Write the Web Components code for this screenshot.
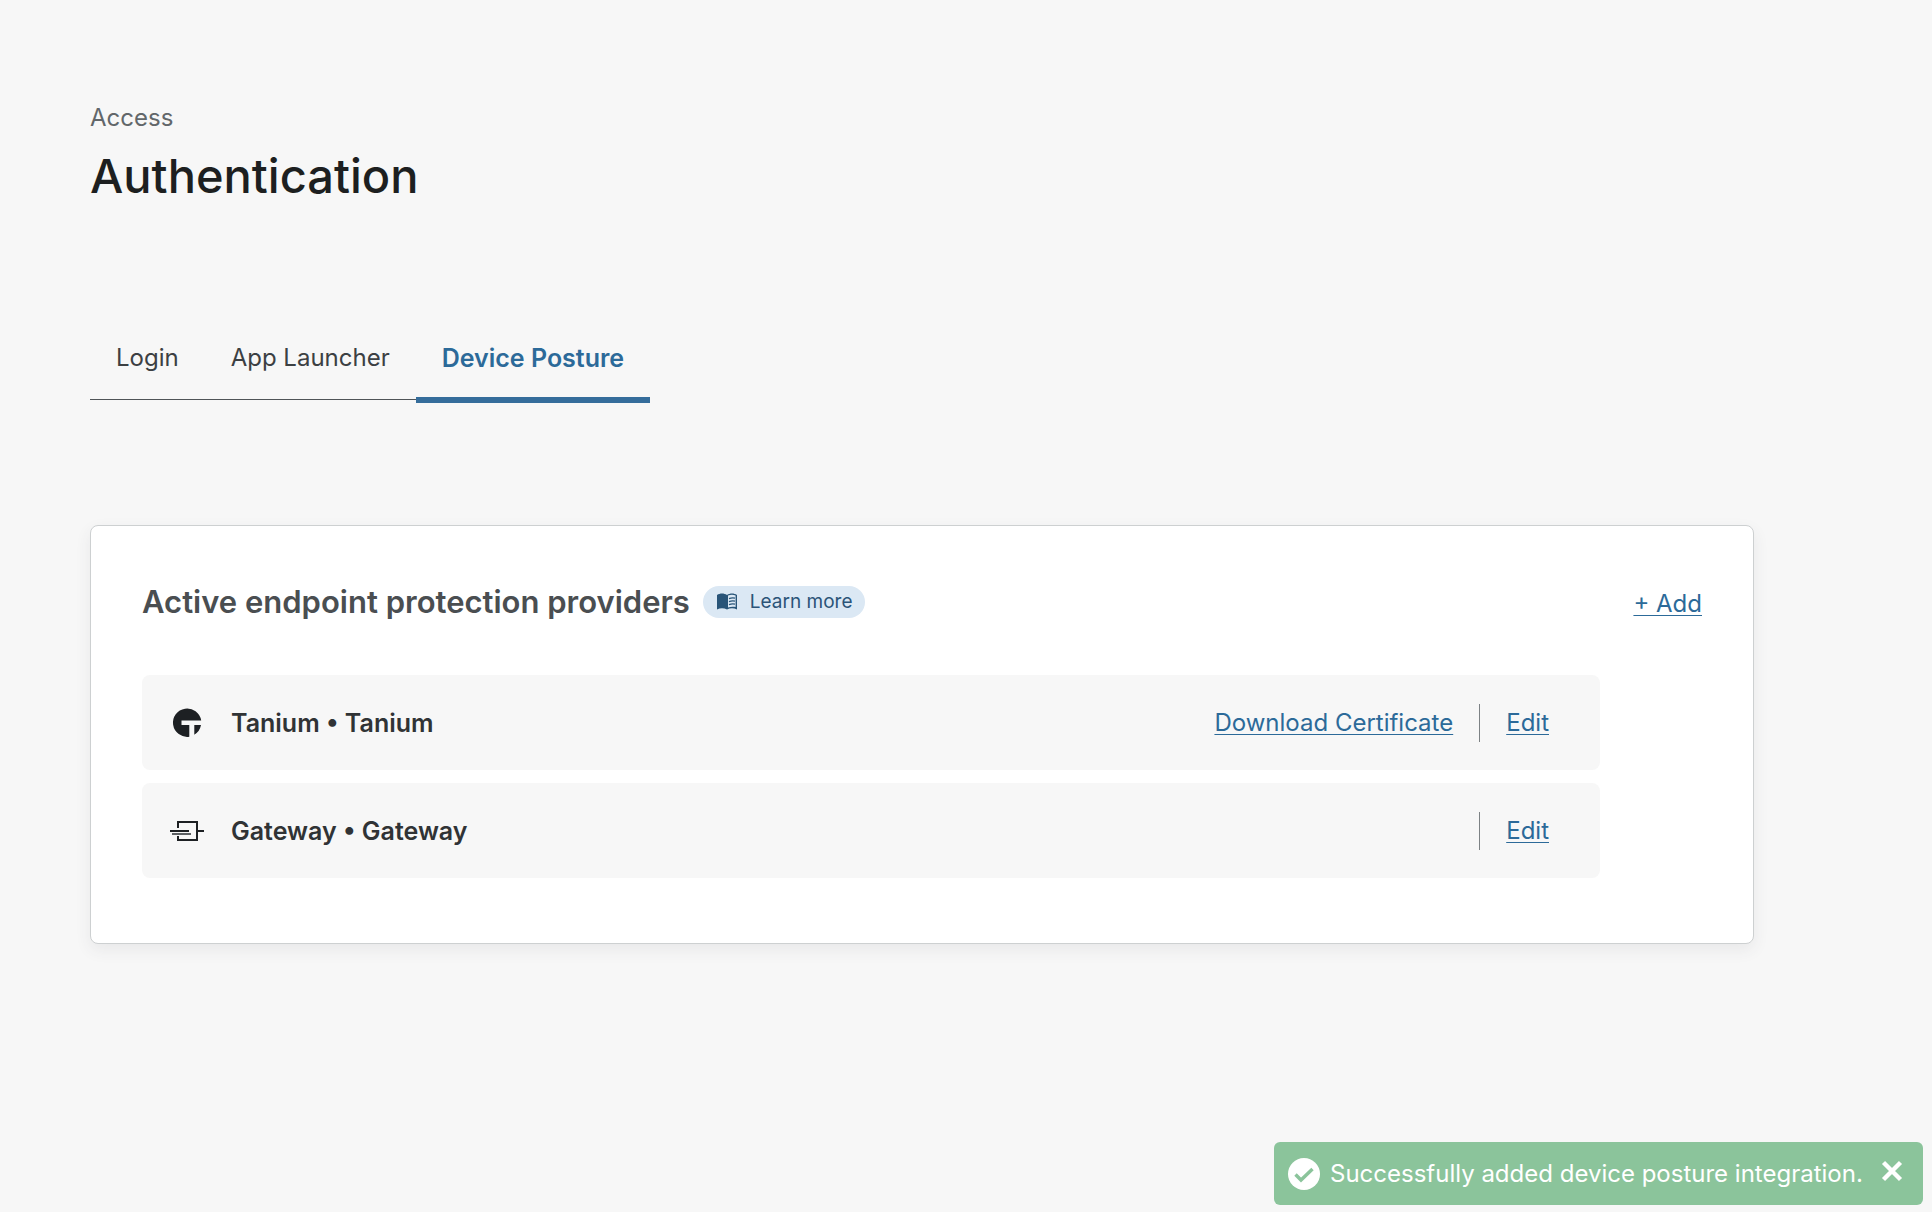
<!DOCTYPE html>
<html lang="en">
<head>
<meta charset="utf-8">
<meta name="viewport" content="width=device-width, initial-scale=1">
<title>Authentication</title>
<style>
  :root {
    --ink: #1d1f20;
    --ink-title: #4a4e51;
    --ink-row: #303335;
    --muted: #62676a;
    --blue: #2c6a99;
    --surface: #f7f7f7;
    --regular: 24px;
    --strong: 25px;
  }
  html, body { margin: 0; min-height: 100vh; }
  body {
    background: var(--surface);
    color: var(--ink);
    font-family: Inter, "Liberation Sans", sans-serif;
    font-size: var(--regular);
    line-height: 32px;
  }
</style>
</head>
<body>
<auth-page></auth-page>

<script>
const define = (name, html, setup) => {
  const template = document.createElement('template');
  template.innerHTML = html;
  customElements.define(name, class extends HTMLElement {
    constructor() {
      super();
      this.attachShadow({ mode: 'open' }).append(template.content.cloneNode(true));
    }
    connectedCallback() { if (setup) setup(this, this.shadowRoot); }
  });
};

define('page-heading', `
  <style>
    :host { display: block; }
    p { margin: 0; color: var(--muted); }
    h1 { margin: 12px 0 0; font-size: 47px; line-height: 60px; font-weight: 500; }
  </style>
  <p><slot name="section"></slot></p>
  <h1><slot></slot></h1>
`);

define('tab-item', `
  <style>
    :host { display: block; }
    a {
      display: block; padding: 0 26px 25px; color: #3c4043; text-decoration: none;
      border-bottom: 1px solid #4f5457; margin-bottom: 3px;
    }
    :host([selected]) a {
      color: var(--blue); font-size: var(--strong); font-weight: 600;
      border-bottom: 6px solid #356d9b; padding-bottom: 23px; margin-bottom: 0;
    }
  </style>
  <a role="tab"><slot></slot></a>
`, (host, root) => {
  const a = root.querySelector('a');
  a.href = host.getAttribute('href');
  a.setAttribute('aria-selected', host.hasAttribute('selected'));
});

define('tab-bar', `
  <style>
    :host { display: flex; }
  </style>
  <slot></slot>
`, host => host.setAttribute('role', 'tablist'));

define('text-link', `
  <style>
    :host { display: inline-block; }
    a { color: var(--blue); text-decoration: underline; text-decoration-thickness: 1px; text-underline-offset: 3px; }
  </style>
  <a><slot></slot></a>
`, (host, root) => { root.querySelector('a').href = host.getAttribute('href'); });

define('learn-more', `
  <style>
    :host { display: block; }
    a {
      display: flex; align-items: center; gap: 12px; height: 32px; padding: 0 13px;
      border-radius: 16px; background: #dbe8f4; color: #2b5478;
      font-size: 19px; font-weight: 400; text-decoration: none;
    }
    svg { display: block; width: 22px; height: 18px; }
  </style>
  <a href="#learn">
    <svg viewBox="0 0 22 18" aria-hidden="true">
      <path fill="#285478" d="M1 2C4 0 8 0 11 2C14 0 18 0 21 2V16.500C18 14.800 14 14.800 11 16.500C8 14.800 4 14.800 1 16.500Z"/>
      <path fill="#dbe8f4" d="M12 2.600C14.500 1.500 17 1.400 19.600 2.500V14C17 13.400 14.500 13.500 12 14.600Z"/>
      <path fill="none" stroke="#285478" stroke-width="1.200" d="M13 5.600Q16 4.400 19 5.100M13 8.600Q16 7.400 19 8.100M13 11.600Q16 10.400 19 11.100"/>
    </svg>
    <slot></slot>
  </a>
`);

define('tanium-icon', `
  <style>:host, svg { display: block; width: 36px; height: 36px; }</style>
  <svg viewBox="0 0 36 36" aria-hidden="true">
    <path fill="#1d2023" d="M32.200 15.500H12.500V20H20.300V31.700A14.200 14.200 0 1 1 32.200 15.500ZM25.300 20H32A14.200 14.200 0 0 1 25.300 29.700Z"/>
  </svg>
`);

define('gateway-icon', `
  <style>:host, svg { display: block; width: 36px; height: 36px; }</style>
  <svg viewBox="0 0 36 36" aria-hidden="true" fill="none" stroke="#1d2023" stroke-width="2">
    <path d="M9 15V9H28V27H9V23M28 18H35"/>
    <path d="M1 18H20"/>
    <path stroke="#5c6063" d="M3 21H22"/>
  </svg>
`);

define('provider-row', `
  <style>
    :host {
      display: flex; align-items: center; height: 95px; box-sizing: border-box;
      padding: 0 51px 0 27px; border-radius: 8px; background: var(--surface);
    }
    h3 { flex: 1; margin: 0 0 0 26px; font-size: var(--strong); font-weight: 600; color: var(--ink-row); }
    .divider { width: 1px; height: 38px; margin: 0 26px; background: #7d8285; }
  </style>
  <slot name="icon"></slot>
  <h3><slot></slot></h3>
  <slot name="download"></slot>
  <span class="divider"></span>
  <slot name="edit"></slot>
`);

define('provider-card', `
  <style>
    :host {
      display: block; padding: 59px 51px 65px; background: #fff;
      border: 1px solid #cdd0d1; border-radius: 8px;
      box-shadow: 0 6px 16px rgba(60, 64, 80, .08);
    }
    header { display: flex; align-items: center; gap: 13px; height: 34px; }
    h2 { margin: 0; font-size: 31px; line-height: 34px; font-weight: 600; color: var(--ink-title); }
    .add { margin-left: auto; padding-top: 4px; }
    .rows { display: flex; flex-direction: column; gap: 13px; margin: 56px 102px 0 0; }
  </style>
  <header>
    <h2><slot name="title"></slot></h2>
    <slot name="help"></slot>
    <div class="add"><slot name="add"></slot></div>
  </header>
  <div class="rows"><slot></slot></div>
`);

define('status-toast', `
  <style>
    :host {
      position: fixed; right: 9px; bottom: 7px; display: flex; align-items: center;
      min-width: 649px; height: 63px; box-sizing: border-box; padding: 0 20px 0 14px; border-radius: 6px;
      background: #8bc49b; color: #fff;
    }
    .tick { width: 32px; height: 32px; margin-right: 10px; }
    button { display: block; border: 0; padding: 0; margin: 0 0 6px auto; background: none; color: inherit; }
    button svg { display: block; width: 22px; height: 22px; }
  </style>
  <svg class="tick" viewBox="0 0 32 32" aria-hidden="true">
    <circle cx="16" cy="16" r="16" fill="#fff"/>
    <path d="M7.500 16.500L13 22L24.500 11" fill="none" stroke="#8bc49b" stroke-width="3.400"/>
  </svg>
  <span role="status"><slot></slot></span>
  <button type="button" aria-label="Close">
    <svg viewBox="0 0 22 22" aria-hidden="true"><path d="M2.500 2.500L19.500 19.500M19.500 2.500L2.500 19.500" stroke="#fff" stroke-width="4.400"/></svg>
  </button>
`, (host, root) => { root.querySelector('button').onclick = () => host.remove(); });

define('auth-page', `
  <style>
    :host { display: block; padding: 102px 178px 0 90px; }
    tab-bar { margin-top: 136px; }
    provider-card { margin-top: 122px; }
  </style>
  <main>
    <page-heading><span slot="section">Access</span>Authentication</page-heading>
    <tab-bar>
      <tab-item href="#login">Login</tab-item>
      <tab-item href="#launcher">App Launcher</tab-item>
      <tab-item href="#posture" selected>Device Posture</tab-item>
    </tab-bar>
    <provider-card>
      <span slot="title">Active endpoint protection providers</span>
      <learn-more slot="help">Learn more</learn-more>
      <text-link slot="add" href="#add">+ Add</text-link>
      <provider-row>
        <tanium-icon slot="icon"></tanium-icon>
        Tanium • Tanium
        <text-link slot="download" href="#certificate">Download Certificate</text-link>
        <text-link slot="edit" href="#edit-tanium">Edit</text-link>
      </provider-row>
      <provider-row>
        <gateway-icon slot="icon"></gateway-icon>
        Gateway • Gateway
        <text-link slot="edit" href="#edit-gateway">Edit</text-link>
      </provider-row>
    </provider-card>
  </main>
  <status-toast>Successfully added device posture integration.</status-toast>
`);
</script>
</body>
</html>
